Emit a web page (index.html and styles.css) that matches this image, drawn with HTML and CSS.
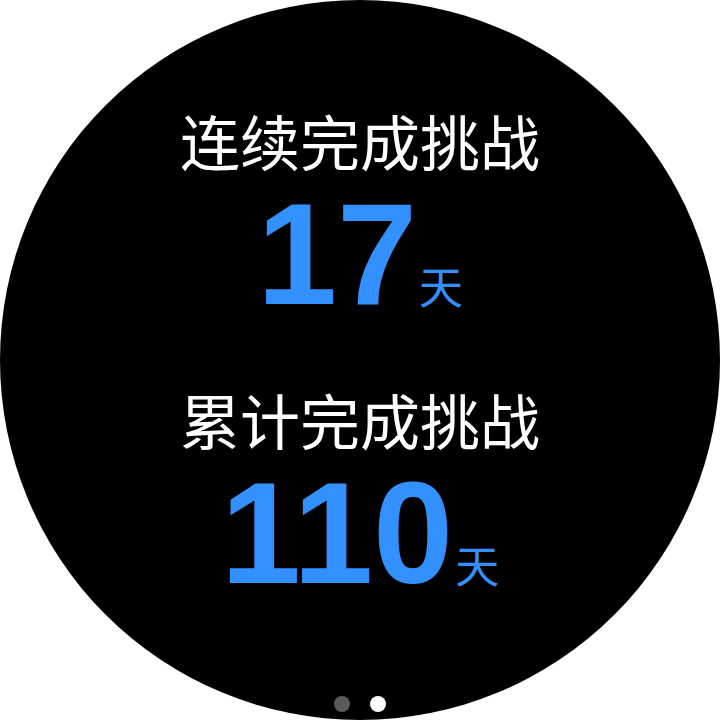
FILE: index.html
```html
<!DOCTYPE html>
<html lang="zh">
<head>
<meta charset="utf-8">
<link rel="stylesheet" href="styles.css">
</head>
<body>
<div class="watch">
  <div class="stat">
    <div class="title">连续完成挑战</div>
    <div class="value"><span class="num">17</span><span class="unit">天</span></div>
  </div>
  <div class="stat">
    <div class="title">累计完成挑战</div>
    <div class="value"><span class="num">110</span><span class="unit">天</span></div>
  </div>
  <div class="dots"><span class="dot"></span><span class="dot active"></span></div>
</div>
</body>
</html>
```
FILE: styles.css
```css
html, body {
  margin: 0;
  padding: 0;
  background: #fff;
}
.watch {
  width: 720px;
  height: 720px;
  border-radius: 50%;
  background: #000;
  display: flex;
  flex-direction: column;
  align-items: center;
  padding-top: 108px;
  box-sizing: border-box;
  position: relative;
  overflow: hidden;
}
.stat {
  display: flex;
  flex-direction: column;
  align-items: center;
  margin-bottom: 57px;
}
.title {
  color: #fff;
  font-family: "Noto Sans CJK SC", sans-serif;
  font-size: 60px;
  line-height: 64px;
}
.value {
  display: flex;
  align-items: baseline;
  line-height: 1;
  margin-top: 8px;
}
.num {
  color: #3391ff;
  font-family: "Liberation Sans", Arial, sans-serif;
  font-weight: bold;
  font-size: 144px;
  line-height: 150px;
}
.unit {
  color: #3391ff;
  font-family: "Noto Sans CJK SC", sans-serif;
  font-size: 44px;
  margin-left: 2px;
}
.dots {
  position: absolute;
  bottom: 8px;
  left: 0;
  right: 0;
  display: flex;
  justify-content: center;
  gap: 20px;
}
.dot {
  width: 16px;
  height: 16px;
  border-radius: 50%;
  background: #5a5a5a;
}
.dot.active {
  background: #fff;
}
```
